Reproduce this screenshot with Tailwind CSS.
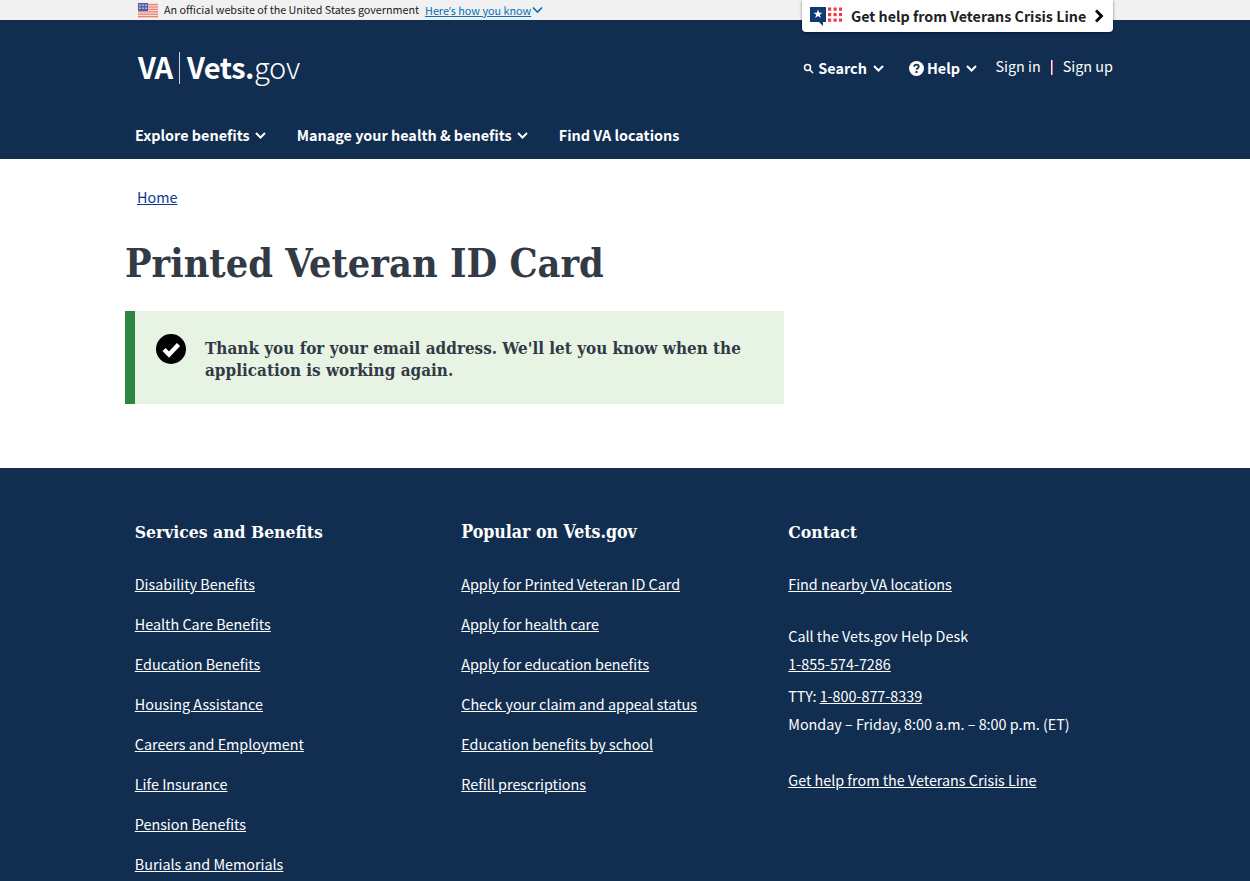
<!DOCTYPE html>
<html lang="en">
<head>
    <meta charset="UTF-8">
    <meta name="viewport" content="width=device-width, initial-scale=1.0">
    <title>Printed Veteran ID Card</title>
    <script src="https://cdn.jsdelivr.net/npm/@tailwindcss/browser@4"></script>
</head>
<body class="h-[881px] overflow-hidden bg-white font-['Noto_Sans_CJK_SC','Source_Sans_Pro',sans-serif] text-[14.35px] text-[#212121]">
    <!-- gov banner -->
    <div class="h-[20px] bg-[#f1f1f1]">
        <div class="relative mx-auto flex h-[20px] w-[1000px] items-center pl-[13px]">
            <svg class="h-[15px] w-[20px]" viewBox="0 0 20 15">
                <rect width="20" height="15" fill="#f9dcd8"/>
                <rect y="1" width="20" height="1.2" fill="#ea7f76"/>
                <rect y="3.4" width="20" height="1.2" fill="#ea7f76"/>
                <rect y="5.8" width="20" height="1.2" fill="#ea7f76"/>
                <rect y="8.2" width="20" height="1.2" fill="#ea7f76"/>
                <rect y="10.6" width="20" height="1.2" fill="#ea7f76"/>
                <rect y="13" width="20" height="1.2" fill="#ea7f76"/>
                <rect width="10" height="8" fill="#4c62a8"/>
                <g fill="#a9b5d8">
                    <rect x="1" y="1.5" width="2" height="1.5"/><rect x="4" y="1.5" width="2" height="1.5"/><rect x="7" y="1.5" width="2" height="1.5"/>
                    <rect x="1" y="4.5" width="2" height="1.5"/><rect x="4" y="4.5" width="2" height="1.5"/><rect x="7" y="4.5" width="2" height="1.5"/>
                </g>
            </svg>
            <span class="ml-[6px] whitespace-nowrap text-[10.75px] leading-[20px] text-[#212121]">An official website of the United States government</span>
            <a href="#" class="ml-[6px] whitespace-nowrap text-[10.8px] leading-[16px] text-[#0071bb] underline">Here<span class="font-['Open_Sans',sans-serif]">’</span>s how you know</a>
            <svg class="ml-[1px] h-[8px] w-[11px]" viewBox="0 0 11 8" fill="none" stroke="#0071bb" stroke-width="1.6"><path d="M1 1.5l4.5 4.5L10 1.5"/></svg>

            <!-- crisis line tab -->
            <a href="#" class="absolute top-0 left-[677px] z-10 flex h-[32px] w-[311px] items-center rounded-b-[4px] bg-white pl-[8px] shadow-[0_1px_3px_rgba(0,0,0,0.5)]">
                <svg class="h-[21px] w-[32px]" viewBox="0 0 32 21">
                    <path d="M0 1h16v15h-3v4l-4-4H0z" fill="#0f3a73"/>
                    <path d="M8 3.5l1.2 3.2h3.3l-2.7 2 1 3.2L8 10l-2.8 1.9 1-3.2-2.7-2h3.3z" fill="#fff"/>
                    <g fill="#ee3a4d">
                        <rect x="18" y="1.5" width="3.2" height="3.2"/><rect x="23.5" y="1.5" width="3.2" height="3.2"/><rect x="29" y="1.5" width="3" height="3.2"/>
                        <rect x="18" y="7" width="3.2" height="3.2"/><rect x="23.5" y="7" width="3.2" height="3.2"/><rect x="29" y="7" width="3" height="3.2"/>
                        <rect x="18" y="12.5" width="3.2" height="3.2"/><rect x="23.5" y="12.5" width="3.2" height="3.2"/><rect x="29" y="12.5" width="3" height="3.2"/>
                    </g>
                </svg>
                <span class="ml-[9px] whitespace-nowrap text-[14.28px] font-bold leading-[32px] text-[#212121]">Get help from Veterans Crisis Line</span>
                <svg class="ml-[8px] h-[14px] w-[10px]" viewBox="0 0 10 14" fill="none" stroke="#000" stroke-width="2.8"><path d="M2 1.5L7.5 7 2 12.5"/></svg>
            </a>
        </div>
    </div>

    <!-- header -->
    <header class="h-[139px] bg-[#112e51] text-white">
        <div class="mx-auto w-[1000px]">
            <div class="flex h-[103px] items-start justify-between">
                <a href="#" class="mt-[30px] ml-[13px] flex h-[32px] items-center text-[29px] leading-[32px]">
                    <span class="font-bold tracking-[-1px]">VA</span>
                    <span class="mt-[4px] mr-[7px] ml-[7px] h-[32px] w-px bg-white/80"></span>
                    <span class="font-bold tracking-[-0.5px]">Vets.</span><span class="font-light tracking-[-0.3px]">gov</span>
                </a>
                <div class="mt-[34px] mr-[12px] flex items-center">
                    <button class="flex items-center text-[14.4px] font-bold leading-[24px]">
                        <svg class="mr-[4px] h-[11px] w-[11px]" viewBox="0 0 11 11" fill="none" stroke="#fff" stroke-width="1.5"><circle cx="4.5" cy="4.5" r="3"/><path d="M7 7l3 3"/></svg>
                        Search
                        <svg class="ml-[6px] h-[7px] w-[11px]" viewBox="0 0 11 7" fill="none" stroke="#fff" stroke-width="2"><path d="M1 1l4.5 4.5L10 1"/></svg>
                    </button>
                    <button class="ml-[25px] flex items-center text-[14.4px] font-bold leading-[24px]">
                        <svg class="mr-[3px] h-[15px] w-[15px]" viewBox="0 0 15 15"><circle cx="7.5" cy="7.5" r="7.5" fill="#fff"/><path d="M5.2 5.8c0-1.4 1-2.2 2.3-2.2s2.3.8 2.3 2c0 1.8-2.3 1.6-2.3 3.2" fill="none" stroke="#112e51" stroke-width="1.7"/><rect x="6.5" y="10" width="2" height="2" fill="#112e51"/></svg>
                        Help
                        <svg class="ml-[6px] h-[7px] w-[11px]" viewBox="0 0 11 7" fill="none" stroke="#fff" stroke-width="2"><path d="M1 1l4.5 4.5L10 1"/></svg>
                    </button>
                    <a href="#" class="ml-[18.5px] mb-[4px] text-[14.35px] leading-[24px]">Sign in</a>
                    <span class="mx-[10px] mb-[2px] h-[15px] w-[2px] border-r border-[#e8618c] bg-[#fbe9ee]"></span>
                    <a href="#" class="mb-[4px] text-[14.4px] leading-[24px]">Sign up</a>
                </div>
            </div>
            <nav class="flex items-center pl-[10px] text-[14.4px] font-bold leading-[24px]">
                <a href="#" class="flex items-center">Explore benefits
                    <svg class="ml-[5px] h-[7px] w-[11px]" viewBox="0 0 11 7" fill="none" stroke="#fff" stroke-width="2"><path d="M1 1l4.5 4.5L10 1"/></svg></a>
                <a href="#" class="ml-[31px] flex items-center">Manage your health &amp; benefits
                    <svg class="ml-[5px] h-[7px] w-[11px]" viewBox="0 0 11 7" fill="none" stroke="#fff" stroke-width="2"><path d="M1 1l4.5 4.5L10 1"/></svg></a>
                <a href="#" class="ml-[31px]">Find VA locations</a>
            </nav>
        </div>
    </header>

    <!-- main -->
    <main class="mx-auto h-[309px] w-[1000px] overflow-hidden">
        <div class="pt-[26px] pl-[12px] leading-[24px]"><a href="#" class="text-[#0a3a8f] underline decoration-[#0a3a8f]">Home</a></div>
        <h1 class="mt-[31px] font-['DejaVu_Serif_Condensed','DejaVu_Serif',serif] text-[39.3px] font-bold leading-[46px] text-[#323a45]">Printed Veteran ID Card</h1>
        <div class="mt-[25px] flex h-[93px] w-[659px] border-l-[10px] border-[#2e8540] bg-[#e7f4e4]">
            <svg class="mt-[23px] ml-[21px] h-[30px] w-[30px] shrink-0" viewBox="0 0 30 30"><circle cx="15" cy="15" r="15" fill="#000"/><path d="M8 15.5l5 5 9.5-10" fill="none" stroke="#fff" stroke-width="4.4"/></svg>
            <p class="mt-[26px] ml-[19px] font-['DejaVu_Serif_Condensed','DejaVu_Serif',serif] text-[16.95px] font-bold leading-[22px] text-[#323a45]">Thank you for your email address. We'll let you know when the application is working again.</p>
        </div>
    </main>

    <!-- footer -->
    <footer class="h-[413px] bg-[#112e51] text-white">
        <div class="mx-auto grid w-[1000px] grid-cols-[326.5px_327px_1fr] pt-[50px] pl-[9.75px]">
            <div>
                <h2 class="mb-[26px] font-['DejaVu_Serif_Condensed','DejaVu_Serif',serif] text-[17.4px] font-bold leading-[28px]">Services and Benefits</h2>
                <ul class="flex flex-col gap-[16px] leading-[24px]">
                    <li><a href="#" class="underline">Disability Benefits</a></li>
                    <li><a href="#" class="underline">Health Care Benefits</a></li>
                    <li><a href="#" class="underline">Education Benefits</a></li>
                    <li><a href="#" class="underline">Housing Assistance</a></li>
                    <li><a href="#" class="underline">Careers and Employment</a></li>
                    <li><a href="#" class="underline">Life Insurance</a></li>
                    <li><a href="#" class="underline">Pension Benefits</a></li>
                    <li><a href="#" class="underline">Burials and Memorials</a></li>
                </ul>
            </div>
            <div>
                <h2 class="mb-[26px] font-['DejaVu_Serif_Condensed','DejaVu_Serif',serif] text-[17.6px] font-bold leading-[28px]">Popular on Vets.gov</h2>
                <ul class="flex flex-col gap-[16px] leading-[24px]">
                    <li><a href="#" class="underline">Apply for Printed Veteran ID Card</a></li>
                    <li><a href="#" class="underline">Apply for health care</a></li>
                    <li><a href="#" class="underline">Apply for education benefits</a></li>
                    <li><a href="#" class="underline">Check your claim and appeal status</a></li>
                    <li><a href="#" class="underline">Education benefits by school</a></li>
                    <li><a href="#" class="underline">Refill prescriptions</a></li>
                </ul>
            </div>
            <div class="leading-[24px]">
                <h2 class="mb-[26px] font-['DejaVu_Serif_Condensed','DejaVu_Serif',serif] text-[17.5px] font-bold leading-[28px]">Contact</h2>
                <a href="#" class="underline">Find nearby VA locations</a>
                <p class="mt-[28px]">Call the Vets.gov Help Desk</p>
                <p class="mt-[4px]"><a href="#" class="underline">1-855-574-7286</a></p>
                <p class="mt-[8px]">TTY: <a href="#" class="underline">1-800-877-8339</a></p>
                <p class="mt-[4px]">Monday – Friday, 8:00 a.m. – 8:00 p.m. (ET)</p>
                <p class="mt-[32px]"><a href="#" class="underline">Get help from the Veterans Crisis Line</a></p>
            </div>
        </div>
    </footer>
</body>
</html>
